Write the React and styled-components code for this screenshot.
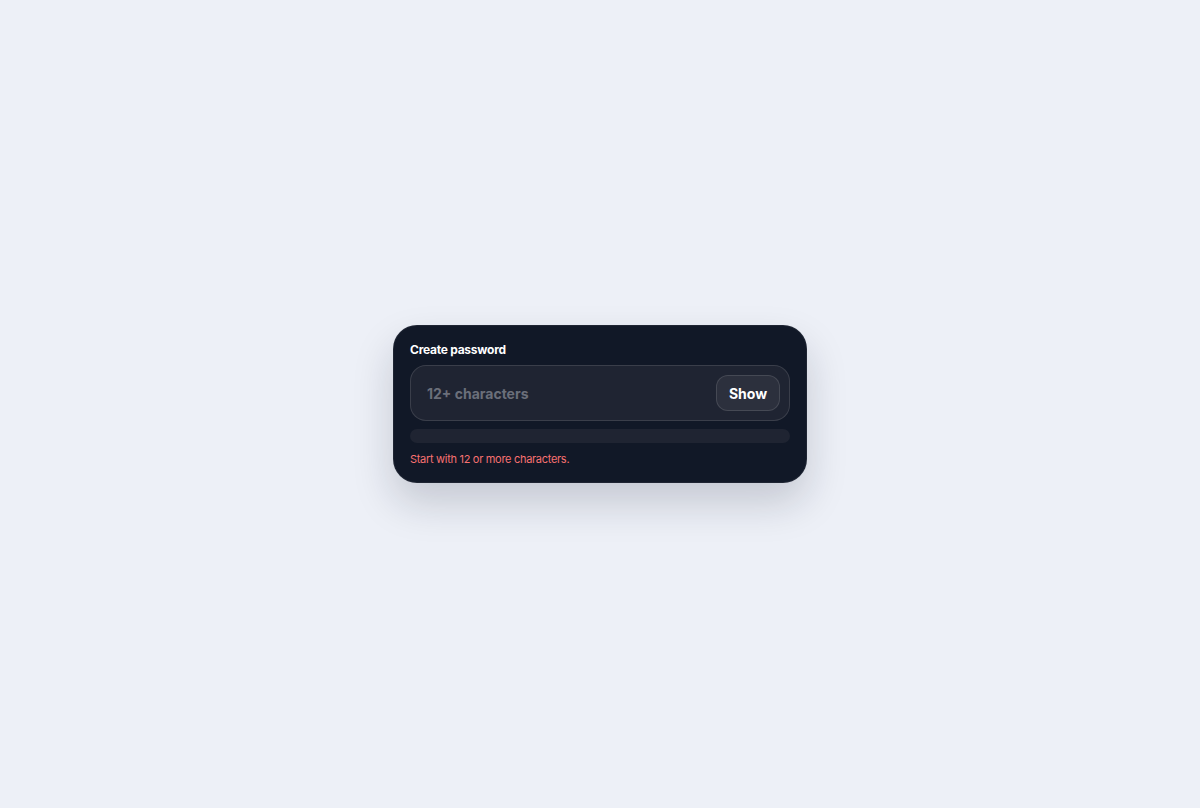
import React, { useState } from 'react';
import styled, { createGlobalStyle } from 'styled-components';

const GlobalStyle = createGlobalStyle`
    html, body {
        margin: 0;
        padding: 0;
        background: #edf0f7;
        font-family: Inter, "Noto Sans", sans-serif;
    }
`;

const Page = styled.div`
    width: 100%;
    height: 808px;
    display: flex;
    align-items: center;
    justify-content: center;
`;

const Card = styled.div`
    width: 414px;
    box-sizing: border-box;
    padding: 16px 16px 15px;
    background: #111827;
    border: 1px solid rgba(255, 255, 255, 0.06);
    border-radius: 24px;
    box-shadow: 0 20px 40px rgba(15, 23, 42, 0.18);
    display: flex;
    flex-direction: column;
`;

const Label = styled.label`
    font-size: 12px;
    font-weight: 700;
    color: #ffffff;
    line-height: 16px;
    letter-spacing: -0.25px;
    margin-bottom: 7px;
`;

const Field = styled.div`
    height: 56px;
    box-sizing: border-box;
    display: flex;
    align-items: center;
    padding: 0 9px 0 16px;
    background: #1f2432;
    border: 1px solid rgba(255, 255, 255, 0.12);
    border-radius: 16px;
`;

const Input = styled.input`
    flex: 1;
    min-width: 0;
    background: transparent;
    border: none;
    outline: none;
    color: #e5e7eb;
    font-family: inherit;
    font-size: 14px;
    font-weight: 700;
    padding: 0;

    &::placeholder {
        color: #6b6f7a;
    }
`;

const ToggleButton = styled.button`
    width: 64px;
    height: 36px;
    border-radius: 12px;
    background: #2c303d;
    border: 1px solid rgba(255, 255, 255, 0.12);
    color: #ffffff;
    font-family: inherit;
    font-size: 14px;
    font-weight: 700;
    cursor: pointer;
`;

const Meter = styled.div`
    height: 14px;
    margin-top: 8px;
    border-radius: 999px;
    background: #1f2432;
    overflow: hidden;
`;

const MeterFill = styled.div`
    height: 100%;
    background: #f87171;
`;

const Hint = styled.p`
    margin: 8px 0 0;
    font-size: 11px;
    line-height: 16px;
    letter-spacing: -0.3px;
    color: #f87171;
`;

export default function App() {
    const [value, setValue] = useState('');
    const [visible, setVisible] = useState(false);
    const strength = Math.min(value.length / 12, 1);

    return (
        <>
            <GlobalStyle />
            <Page>
                <Card>
                    <Label htmlFor="pw">Create password</Label>
                    <Field>
                        <Input
                            id="pw"
                            type={visible ? 'text' : 'password'}
                            placeholder="12+ characters"
                            value={value}
                            onChange={(e) => setValue(e.target.value)}
                        />
                        <ToggleButton onClick={() => setVisible(!visible)}>
                            {visible ? 'Hide' : 'Show'}
                        </ToggleButton>
                    </Field>
                    <Meter>
                        <MeterFill style={{ width: `${strength * 100}%` }} />
                    </Meter>
                    <Hint>Start with 12 or more characters.</Hint>
                </Card>
            </Page>
        </>
    );
}
